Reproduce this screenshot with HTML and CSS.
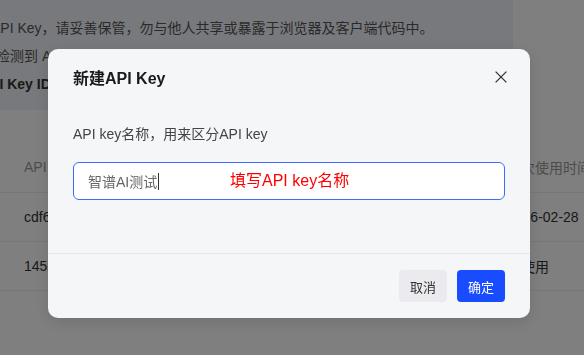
FILE: index.html
```html
<!DOCTYPE html>
<html lang="zh-CN">
<head>
  <meta charset="UTF-8" />
  <meta name="viewport" content="width=device-width, initial-scale=1" />
  <title>API Keys</title>
  <link rel="stylesheet" href="styles.css">
</head>
<body>
  <div class="page">
    <section class="notice">
      <p class="notice-line line-1">API Key，请妥善保管，勿与他人共享或暴露于浏览器及客户端代码中。</p>
      <p class="notice-line line-2">检测到 API Key 已公开泄露，可能会自动对相关密钥进行重置或作其他处理。</p>
      <p class="notice-line line-3">API Key ID</p>
    </section>

    <table class="keys" aria-label="API key list">
      <colgroup>
        <col class="col-key" />
        <col class="col-name" />
        <col class="col-created" />
        <col class="col-used" />
        <col class="col-action" />
      </colgroup>
      <thead>
        <tr>
          <th>API Key</th>
          <th>名称</th>
          <th>创建时间</th>
          <th>上次使用时间</th>
          <th>操作</th>
        </tr>
      </thead>
      <tbody>
        <tr>
          <td>cdf6a1e8b4c94e1f.****</td>
          <td>默认</td>
          <td>2025-11-02</td>
          <td>2026-02-28</td>
          <td>删除</td>
        </tr>
        <tr>
          <td>145b2d7e90aa41c3.****</td>
          <td>测试</td>
          <td>2026-01-15</td>
          <td>未使用</td>
          <td>删除</td>
        </tr>
      </tbody>
    </table>
  </div>

  <div class="overlay">
    <div class="modal" role="dialog" aria-labelledby="modal-title">
      <div class="modal-header">
        <h2 id="modal-title">新建API Key</h2>
        <button class="close-btn" aria-label="关闭">
          <svg width="12" height="12" viewBox="0 0 12 12"><path d="M0.6 0.6 L11.4 11.4 M11.4 0.6 L0.6 11.4" stroke="#333" stroke-width="1.3" fill="none"/></svg>
        </button>
      </div>
      <div class="modal-body">
        <label class="field-label">API key名称，用来区分API key</label>
        <div class="field">
          <div class="text-input" role="textbox">智谱AI测试<span class="caret"></span></div>
          <span class="annotation">填写API key名称</span>
        </div>
      </div>
      <div class="modal-footer">
        <button class="btn btn-cancel">取消</button>
        <button class="btn btn-primary">确定</button>
      </div>
    </div>
  </div>
</body>
</html>
```

FILE: styles.css
```css
:root {
  --primary: #1a4cff;
  --text: #1a1a1a;
  --text-secondary: #555;
  --border: #eeeeee;
  --modal-bg: #f5f6f8;
}
* { box-sizing: border-box; }
body {
  margin: 0;
  background: #fff;
  font-family: 'Liberation Sans', 'Noto Sans CJK SC', sans-serif;
  color: #333;
  overflow: hidden;
  height: 355px;
}
.page { width: 584px; }
.notice {
  width: 513px;
  background: #f0f2fa;
  padding: 14px 0 12px;
  overflow: hidden;
}
.notice-line {
  margin: 0;
  font-size: 14px;
  line-height: 28px;
  white-space: nowrap;
  color: #555;
}
.line-1 { margin-left: -9px; }
.line-2 { margin-left: -4px; }
.line-3 {
  margin-left: -20px;
  font-weight: 700;
  color: #333;
}
.keys {
  margin-top: 32px;
  width: 760px;
  table-layout: fixed;
  border-collapse: collapse;
}
.col-key { width: 190px; }
.col-name { width: 150px; }
.col-created { width: 155px; }
.col-used { width: 140px; }
.col-action { width: 125px; }
.keys th, .keys td {
  padding: 0 12px;
  text-align: left;
  font-size: 14px;
  white-space: nowrap;
  overflow: hidden;
  border-bottom: 1px solid var(--border);
}
.keys th:first-child, .keys td:first-child { padding-left: 24px; }
.keys th {
  height: 50px;
  font-weight: 400;
  color: #999;
}
.keys td {
  height: 49px;
  color: #333;
}

.overlay {
  position: fixed;
  inset: 0;
  background: rgba(0, 0, 0, 0.5);
  padding: 49px 0 0 48px;
}
.modal {
  width: 482px;
  background: var(--modal-bg);
  border-radius: 10px;
  box-shadow: 0 4px 16px rgba(0, 0, 0, 0.12);
  display: flex;
  flex-direction: column;
}
.modal-header {
  display: flex;
  align-items: center;
  justify-content: space-between;
  padding: 19px 23px 0 25px;
  height: 41px;
}
.modal-header h2 {
  margin: 0;
  font-size: 16px;
  font-weight: 700;
  line-height: 22px;
  color: var(--text);
}
.close-btn {
  background: none;
  border: none;
  padding: 0;
  width: 12px;
  height: 12px;
  display: flex;
  margin-top: -4px;
  cursor: pointer;
}
.modal-body {
  padding: 34px 25px 53px;
  display: flex;
  flex-direction: column;
  gap: 18px;
}
.field-label {
  font-size: 14px;
  line-height: 20px;
  color: #444;
}
.field { position: relative; }
.text-input {
  height: 38px;
  background: #fff;
  border: 1px solid #3d6bff;
  border-radius: 6px;
  padding: 0 14px;
  display: flex;
  align-items: center;
  font-size: 14px;
  color: #666;
}
.caret {
  display: inline-block;
  width: 1px;
  height: 17px;
  background: #333;
  margin-left: 1px;
}
.annotation {
  position: absolute;
  left: 157px;
  top: 8px;
  font-size: 16px;
  line-height: 22px;
  color: #ff0000;
}
.modal-footer {
  border-top: 1px solid #e6e8eb;
  padding: 16px 25px;
  display: flex;
  justify-content: flex-end;
  gap: 10px;
}
.btn {
  width: 48px;
  height: 32px;
  border: none;
  border-radius: 4px;
  font-family: inherit;
  font-size: 13px;
  cursor: pointer;
}
.btn-cancel {
  background: #ebebef;
  color: #333;
}
.btn-primary {
  background: var(--primary);
  color: #fff;
}
```
